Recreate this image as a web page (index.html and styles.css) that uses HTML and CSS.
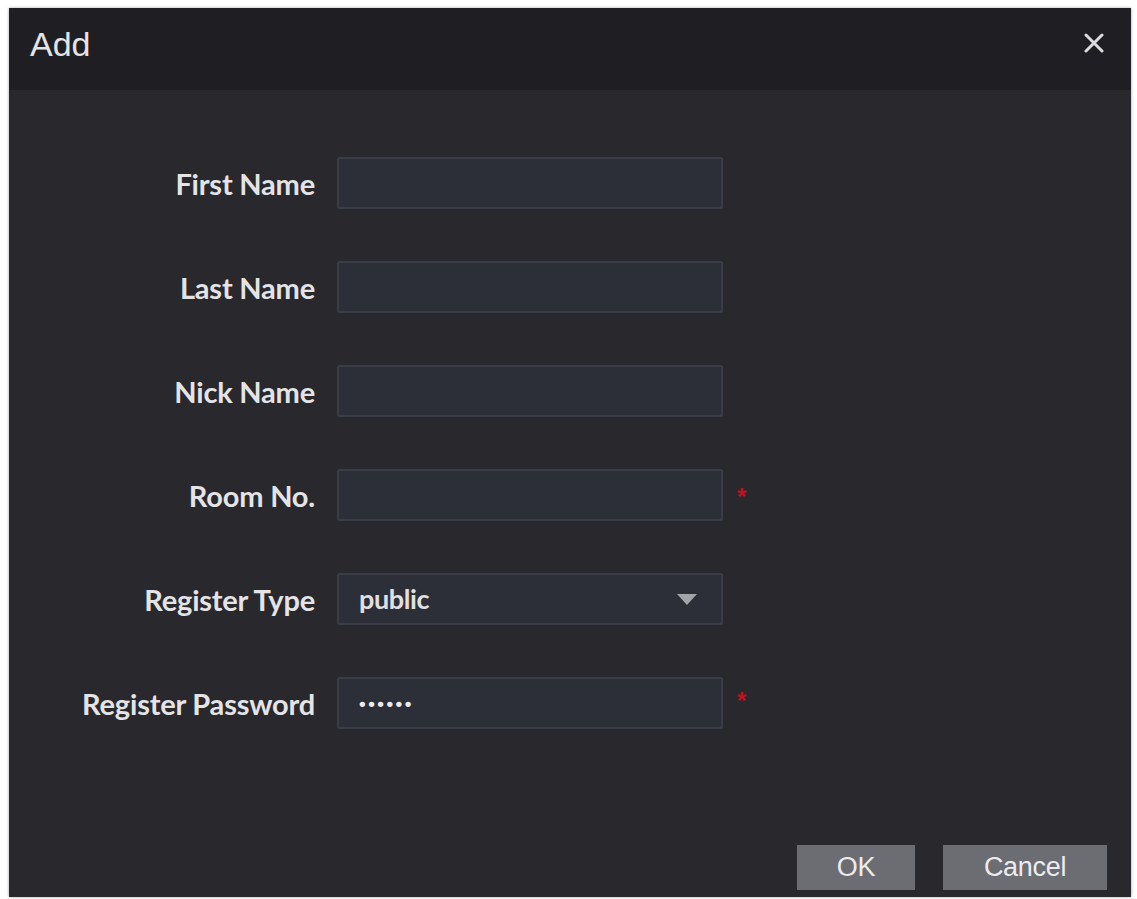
FILE: index.html
```html
<!DOCTYPE html>
<html>
<head>
<meta charset="utf-8">
<link rel="stylesheet" href="styles.css">
</head>
<body>
<div class="dialog">
  <div class="header">
    <span class="title">Add</span>
    <svg class="close" width="20" height="20" viewBox="0 0 20 20"><path d="M2 2 L18 18 M18 2 L2 18" stroke="#dcdcdc" stroke-width="3" stroke-linecap="round"/></svg>
  </div>
  <div class="body">
    <div class="form">
      <label class="label">First Name</label>
      <div class="input"></div>
      <span></span>

      <label class="label">Last Name</label>
      <div class="input"></div>
      <span></span>

      <label class="label">Nick Name</label>
      <div class="input"></div>
      <span></span>

      <label class="label">Room No.</label>
      <div class="input"></div>
      <span class="req">*</span>

      <label class="label">Register Type</label>
      <div class="input select"><span class="val">public</span><svg width="20" height="11" viewBox="0 0 20 11"><path d="M0 0 H20 L10 11 Z" fill="#a3a4aa"/></svg></div>
      <span></span>

      <label class="label">Register Password</label>
      <div class="input pwd"><span class="dots">••••••</span></div>
      <span class="req req-high">*</span>
    </div>
    <div class="footer">
      <button class="btn ok">OK</button>
      <button class="btn cancel">Cancel</button>
    </div>
  </div>
</div>
</body>
</html>
```

FILE: styles.css
```css
html, body {
  margin: 0;
  padding: 0;
  background: #ffffff;
}
body {
  padding: 8px 6px 2px 9px;
}
.dialog {
  width: 1122px;
  height: 889px;
  background: #28282d;
  display: flex;
  flex-direction: column;
  box-shadow: 0 0 3px rgba(0,0,0,0.35);
}
.header {
  height: 82px;
  background: #1f1f23;
  display: flex;
  align-items: center;
  justify-content: space-between;
  padding: 0 27px 0 21px;
}
.title {
  font-family: "Liberation Sans", Arial, sans-serif;
  font-size: 34px;
  color: #e4e4e6;
  margin-top: -10px;
}
.close {
  margin-top: -12px;
}
.body {
  flex: 1;
  display: flex;
  flex-direction: column;
  justify-content: space-between;
  padding-top: 67px;
}
.form {
  display: grid;
  grid-template-columns: 306px 386px auto;
  column-gap: 22px;
  row-gap: 52px;
  align-items: center;
}
.label {
  font-family: Lato, "Open Sans", sans-serif;
  font-weight: bold;
  font-size: 29px;
  color: #e4e4e6;
  text-align: right;
  letter-spacing: -0.2px;
}
.input {
  box-sizing: border-box;
  height: 52px;
  background: #2c2f38;
  border: 2px solid #3a3d47;
  border-radius: 2px;
  display: flex;
  align-items: center;
  padding: 0 20px;
}
.select {
  justify-content: space-between;
  padding: 0 24px 0 20px;
}
.val {
  font-family: Lato, "Open Sans", sans-serif;
  font-weight: bold;
  font-size: 27px;
  color: #e0e0e2;
  letter-spacing: -0.4px;
  margin-top: -2px;
}
.dots {
  font-family: "Liberation Sans", Arial, sans-serif;
  font-size: 19px;
  font-weight: bold;
  color: #ececee;
  letter-spacing: 2.5px;
  margin-top: 2px;
}
.req {
  color: #c0121e;
  font-family: "Liberation Sans", Arial, sans-serif;
  font-size: 24px;
  font-weight: bold;
  margin-left: -8px;
  margin-top: 4px;
}
.req-high {
  margin-top: -4px;
}
.footer {
  display: flex;
  justify-content: flex-end;
  gap: 28px;
  padding: 0 24px 7px 0;
}
.btn {
  height: 45px;
  border: none;
  background: #6c6d73;
  color: #ececee;
  font-family: "Liberation Sans", Arial, sans-serif;
  font-size: 27px;
  letter-spacing: -0.3px;
  padding: 0;
}
.ok { width: 118px; }
.cancel { width: 164px; }
```
